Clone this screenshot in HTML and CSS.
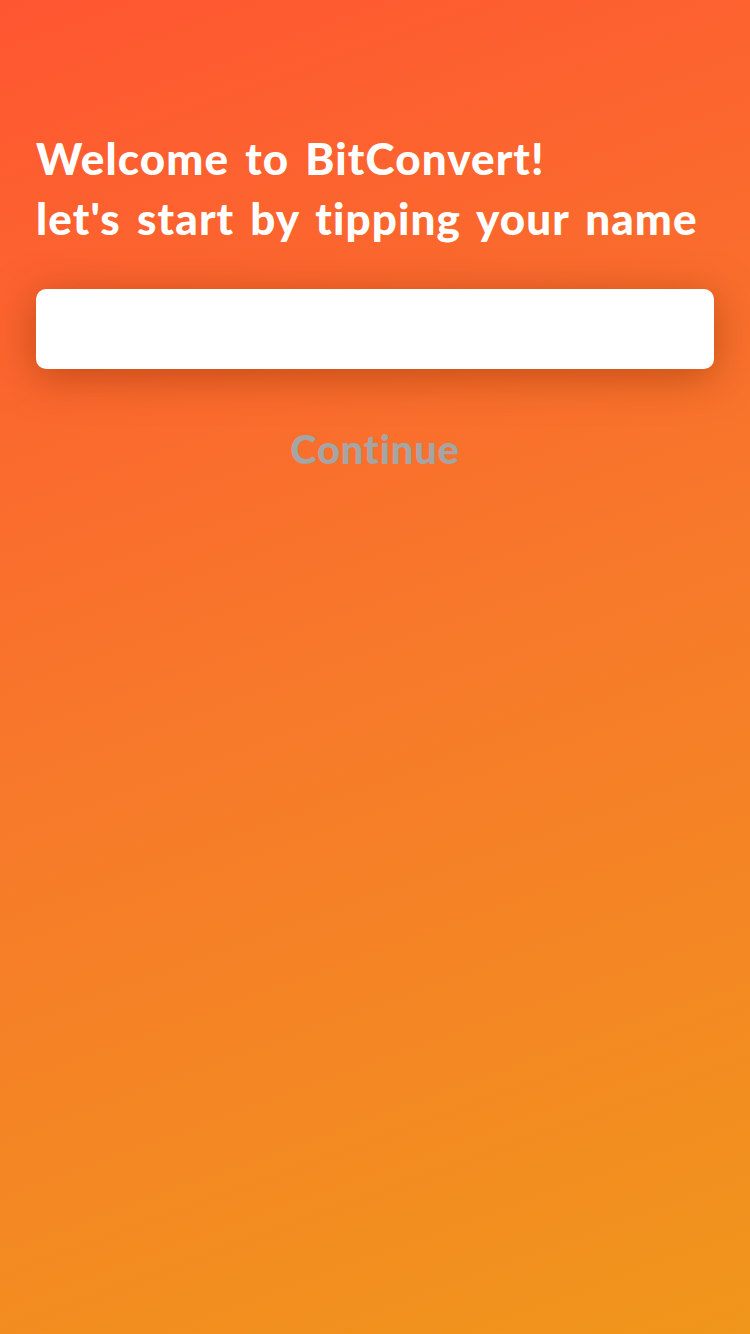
FILE: index.html
```html
<!DOCTYPE html>
<html lang="en">
<head>
<meta charset="utf-8">
<title>BitConvert</title>
<link rel="stylesheet" href="styles.css">
</head>
<body>
<main class="screen">
  <h1 class="title">Welcome to BitConvert!<br>let's start by tipping your name</h1>
  <input class="name-input" type="text" aria-label="Your name">
  <button class="continue" type="button">Continue</button>
</main>
</body>
</html>
```
FILE: styles.css
```css
html, body {
  margin: 0;
  padding: 0;
  height: 100%;
}
body {
  background: linear-gradient(160deg, #ff5631 0%, #f7792a 50%, #f0961b 100%);
  font-family: "Lato", "Open Sans", sans-serif;
}
.screen {
  min-height: 1334px;
  box-sizing: border-box;
  padding: 128px 36px 0;
  display: flex;
  flex-direction: column;
}
.title {
  margin: 0;
  color: #fff;
  font-weight: 900;
  font-size: 44px;
  line-height: 60px;
  letter-spacing: 1.1px;
  word-spacing: 4.5px;
}
.name-input {
  margin-top: 41px;
  height: 80px;
  border: 0;
  border-radius: 10px;
  background: #fff;
  box-shadow: 0 8px 40px rgba(140, 45, 0, 0.5);
  outline: none;
  padding: 0 20px;
  font: inherit;
}
.continue {
  align-self: center;
  margin-top: 52px;
  background: none;
  border: 0;
  padding: 0;
  color: #a5a5a5;
  font-family: inherit;
  font-weight: 900;
  font-size: 40px;
  line-height: 56px;
  letter-spacing: 0.7px;
}
```
